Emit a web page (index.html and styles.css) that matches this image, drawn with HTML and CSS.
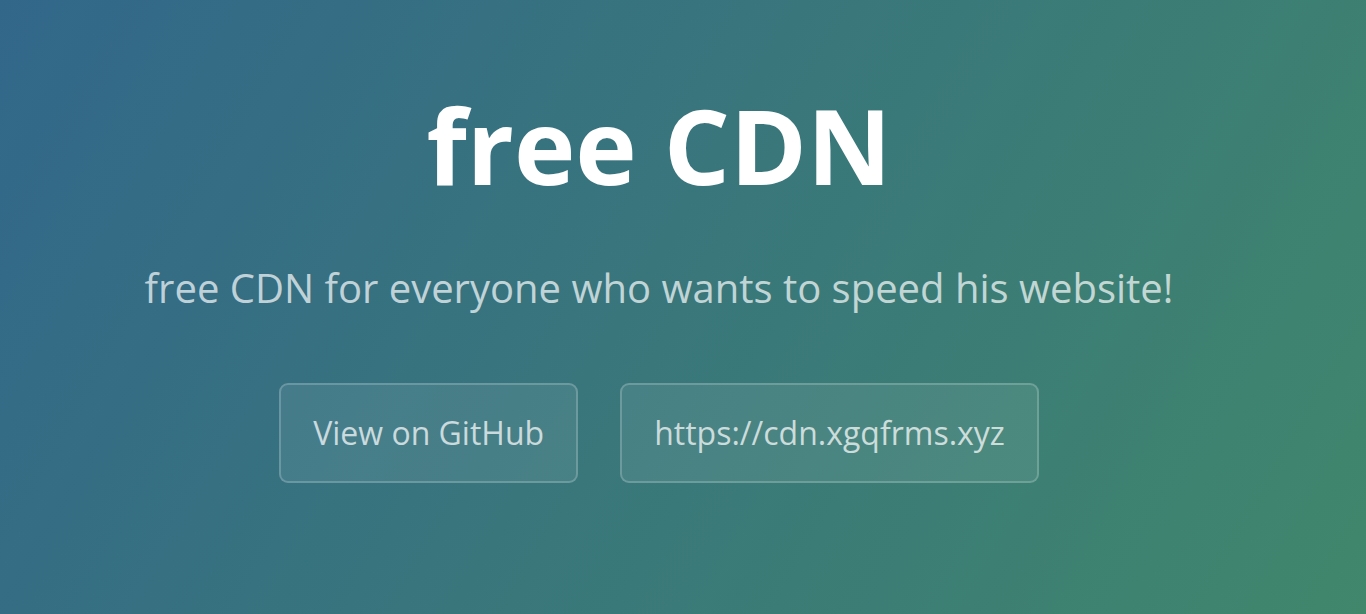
FILE: index.html
```html
<!DOCTYPE html>
<html lang="en">
<head>
<meta charset="utf-8">
<title>free CDN</title>
<link rel="stylesheet" href="styles.css">
</head>
<body>
<section class="page-header">
  <h1 class="project-name">free CDN</h1>
  <h2 class="project-tagline">free CDN for everyone who wants to speed his website!</h2>
  <div class="actions">
    <a class="btn" href="#">View on GitHub</a>
    <a class="btn" href="#">https://cdn.xgqfrms.xyz</a>
  </div>
</section>
</body>
</html>
```
FILE: styles.css
```css
html, body {
  margin: 0;
  padding: 0;
  height: 100%;
}
body {
  font-family: "Open Sans", "Helvetica Neue", Arial, sans-serif;
  overflow: hidden;
}
.page-header {
  min-height: 614px;
  box-sizing: border-box;
  background-color: #3a7a78;
  background-image: linear-gradient(120deg, #32678a, #40876c);
  display: flex;
  flex-direction: column;
  align-items: center;
  padding: 72px 48px 0 0;
  color: #fff;
  text-align: center;
}
.project-name {
  margin: 0;
  font-size: 104px;
  font-weight: 700;
  line-height: 1.4;
}
.project-tagline {
  margin: 40px 0 0;
  font-size: 40px;
  font-weight: 400;
  line-height: 1.5;
  color: rgba(255, 255, 255, 0.7);
}
.actions {
  display: flex;
  gap: 42px;
  margin-top: 65px;
}
.btn {
  display: block;
  padding: 24px 32px;
  font-size: 32px;
  line-height: 48px;
  color: rgba(255, 255, 255, 0.72);
  text-decoration: none;
  background-color: rgba(255, 255, 255, 0.08);
  border: 2px solid rgba(255, 255, 255, 0.2);
  border-radius: 9px;
}
```
